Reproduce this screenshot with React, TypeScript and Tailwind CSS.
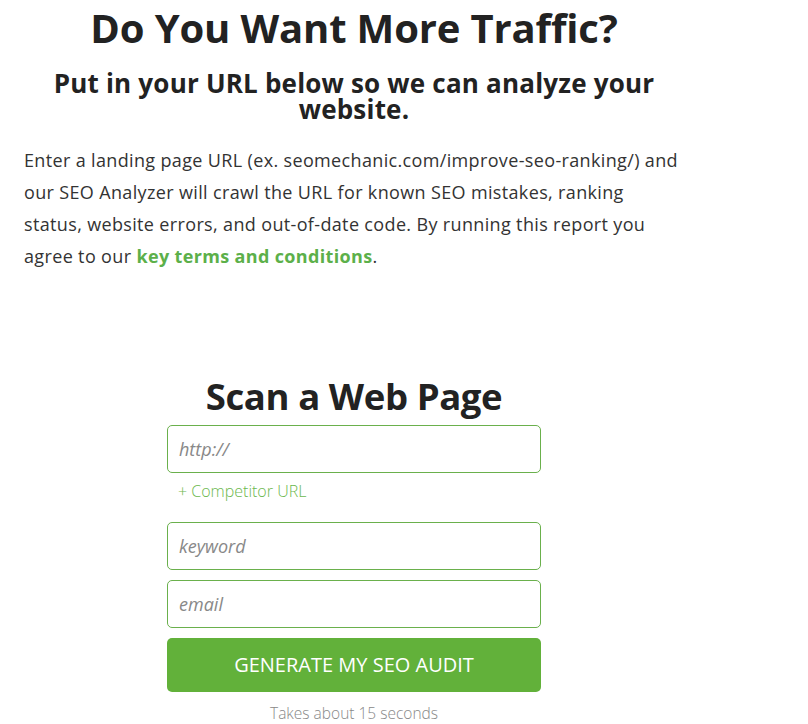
import React from "react";

export default function App() {
  return (
    <div className="min-h-[724px] w-[808px] bg-white font-['Open_Sans',sans-serif] text-[#222]">
      <div className="w-[708px] px-6 pt-1">
        <h1 className="text-center text-[40px] font-bold leading-[48px] tracking-[-0.15px] text-[#222]">
          Do You Want More Traffic?
        </h1>
        <h2 className="mt-[18px] px-[20px] text-center text-[26px] font-bold leading-[26px] tracking-[0.2px] text-[#222]">
          Put in your URL below so we can analyze your website.
        </h2>
        <p className="mt-[22px] text-[18px] leading-[32px] tracking-[0.35px] text-[#333]">
          Enter a landing page URL (ex. seomechanic.com/improve-seo-ranking/) and our SEO Analyzer will crawl the URL for known SEO mistakes, ranking status, website errors, and out-of-date code. By running this report you agree to our{" "}
          <a className="font-bold text-[#5cb04a]">key terms and conditions</a>.
        </p>
        <div className="mt-[100px] flex flex-col items-center">
          <h3 className="text-[36.5px] font-bold leading-[48px] tracking-[-0.4px] text-[#222]">
            Scan a Web Page
          </h3>
          <div className="mt-[5px] w-[374px]">
            <div className="flex h-[48px] items-center rounded-[5px] border border-[#6ab04c] px-[11px] text-[18px] italic text-[#888]">
              http://
            </div>
            <div className="mt-[6px] pl-[11px] text-[16px] font-light leading-[24px] text-[#6cb84e]">
              + Competitor URL
            </div>
            <div className="mt-[19px] flex h-[48px] items-center rounded-[5px] border border-[#6ab04c] px-[11px] text-[18px] italic text-[#888]">
              keyword
            </div>
            <div className="mt-[10px] flex h-[48px] items-center rounded-[5px] border border-[#6ab04c] px-[11px] text-[18px] italic text-[#888]">
              email
            </div>
            <button className="mt-[10px] flex h-[54px] w-full items-center justify-center rounded-[5px] bg-[#62b13a] text-[20px] uppercase text-white">
              Generate my SEO Audit
            </button>
            <div className="mt-[11px] text-center text-[15.5px] font-light leading-[20px] text-[#888]">
              Takes about 15 seconds
            </div>
          </div>
        </div>
      </div>
    </div>
  );
}
